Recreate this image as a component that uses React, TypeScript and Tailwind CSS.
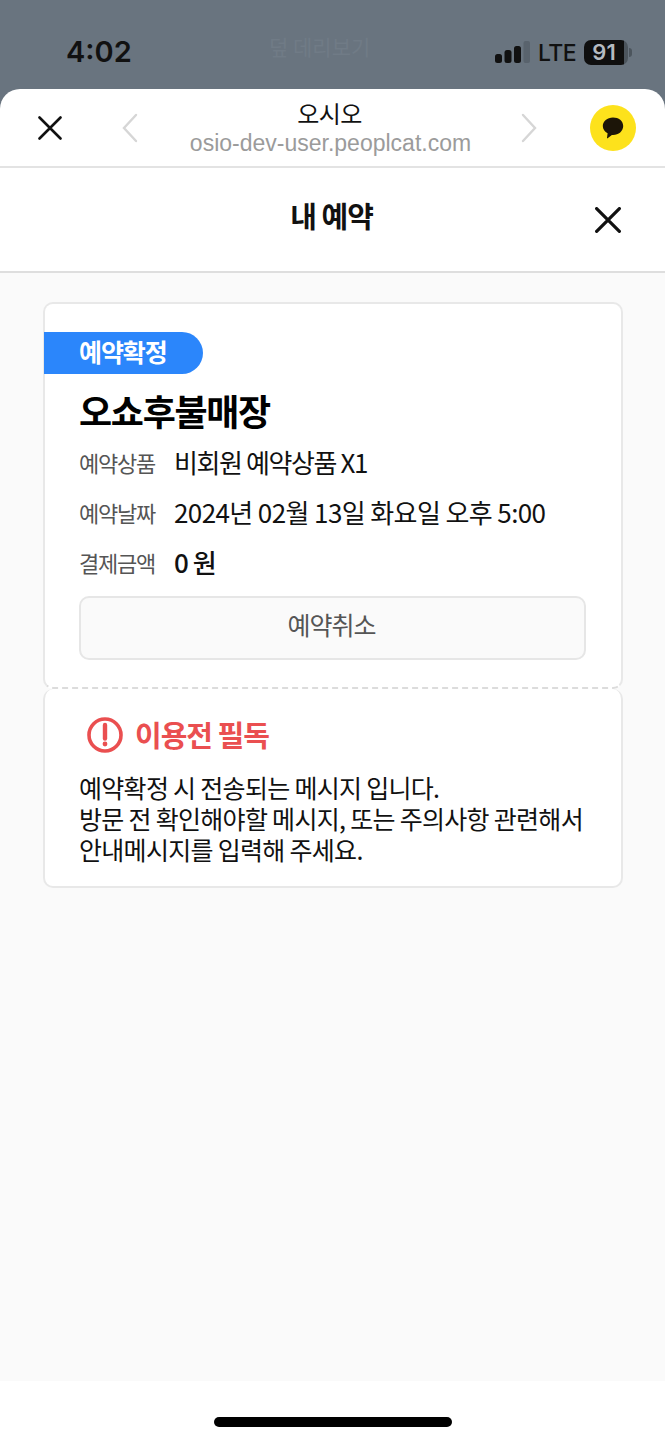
const KR = { fontFamily: '"Noto Sans CJK KR", "Noto Sans", sans-serif' };

function XIcon({ size, stroke }: { size: number; stroke: number }) {
  return (
    <svg width={size} height={size} viewBox="0 0 24 24" fill="none" stroke="#111" strokeWidth={stroke} strokeLinecap="round">
      <path d="M1.5 1.5 22.5 22.5M22.5 1.5 1.5 22.5" />
    </svg>
  );
}

function Row({ label, value, cls }: { label: string; value: string; cls: string }) {
  return (
    <div className="flex h-[50px] items-center">
      <span className="w-[95px] shrink-0 pt-[3px] text-[22px] tracking-[-1.2px] text-[#555]">{label}</span>
      <span className={`text-[26px] text-[#111] ${cls}`}>{value}</span>
    </div>
  );
}

export default function App() {
  return (
    <div style={KR} className="flex h-[1440px] w-[665px] flex-col overflow-hidden bg-[#69747f]">
      <div className="flex h-[89px] shrink-0 items-center pt-[15px] pl-[66px] pr-[33px]">
        <span className="w-[132px] text-[29px] font-semibold text-[#111]" style={{ fontFamily: "Inter, sans-serif" }}>4:02</span>
        <span className="mb-[10px] pl-[71px] text-[21px] text-[#707b86]">덮 데리보기</span>
        <div className="ml-auto flex items-center">
          <svg width="35" height="22" viewBox="0 0 35 22" className="mr-[8px]">
            <rect x="0" y="13" width="7" height="9" rx="2.500" fill="#111" />
            <rect x="9.500" y="9" width="7" height="13" rx="2.500" fill="#111" />
            <rect x="19" y="5" width="7" height="17" rx="2.500" fill="#111" />
            <rect x="28.500" y="0" width="6.500" height="22" rx="2" fill="#59636d" />
          </svg>
          <span className="mr-[8px] pt-[2px] text-[23px] font-medium leading-none tracking-[-0.6px] text-[#111]" style={{ fontFamily: "Inter, sans-serif" }}>LTE</span>
          <div className="flex h-[25px] w-[44px] items-center justify-center rounded-[7px] bg-[linear-gradient(90deg,#0f0f0f_91%,#4c555d_91%)] pr-[4px] text-[22px] font-semibold text-[#b5bbc1]" style={{ fontFamily: "Inter, sans-serif" }}>91</div>
          <div className="ml-[1px] h-[9px] w-[3px] rounded-r-full bg-[#4c555d]" />
        </div>
      </div>

      <div className="flex min-h-0 flex-1 flex-col rounded-t-[20px] bg-white">
        <div className="flex h-[79px] shrink-0 items-center border-b-2 border-[#e3e3e3] pl-[38px] pr-[29px]">
          <XIcon size={24} stroke={2.6} />
          <svg width="16" height="30" viewBox="0 0 16 30" fill="none" stroke="#d6d6d6" strokeWidth="2.4" strokeLinecap="round" className="ml-[60px]"><path d="M14 2 2 15l12 13" /></svg>
          <div className="flex flex-1 flex-col items-center">
            <span className="text-[24px] leading-[30px] tracking-[-0.5px] text-[#111]">오시오</span>
            <span className="pl-[2px] pt-[1px] text-[23px] leading-[28px] text-[#9b9b9b]" style={{ fontFamily: '"Liberation Sans", sans-serif' }}>osio-dev-user.peoplcat.com</span>
          </div>
          <svg width="16" height="30" viewBox="0 0 16 30" fill="none" stroke="#d6d6d6" strokeWidth="2.4" strokeLinecap="round" className="mr-[53px]"><path d="M2 2l12 13L2 28" /></svg>
          <div className="flex h-[46px] w-[46px] items-center justify-center rounded-full bg-[#fde21c]">
            <svg width="22" height="22" viewBox="0 0 22 22"><path d="M11 0.500C5.300 0.500 0.800 4.300 0.800 9c0 3.100 2 5.700 4.800 7.200L5 21c0 .4.300.5.600.3l4.300-3.400c.4 0 .8.100 1.100.100 5.700 0 10.200-3.900 10.200-9S16.700 0.500 11 0.500Z" fill="#1c1508" /></svg>
          </div>
        </div>

        <div className="grid h-[105px] shrink-0 grid-cols-[1fr_auto_1fr] items-center border-b-2 border-[#dedede]">
          <div />
          <div className="pb-[8px] pr-[2px] text-[29px] font-bold tracking-[-1px] text-[#111]">내 예약</div>
          <div className="flex justify-end pr-[44px]"><XIcon size={26} stroke={3} /></div>
        </div>

        <div className="flex flex-1 flex-col bg-[#fafafa] pl-[43px] pr-[42px] pt-[29px]">
          <div className="flex h-[387px] flex-col rounded-[10px] border-2 border-[#e8e8e8] [border-bottom-color:#dcdcdc] [border-bottom-style:dashed] bg-white pt-[28px]">
            <div className="-ml-[1px] flex h-[42px] w-[159px] items-center rounded-r-[21px] bg-[#2b86fb] pb-[3px] pl-[35px] text-[25px] font-bold tracking-[-1.1px] text-white">예약확정</div>
            <div className="pl-[34px] pr-[35px]">
              <div className="mt-[12px] text-[36px] font-bold leading-[48px] tracking-[-1.300px] text-black">오쇼후불매장</div>
              <div className="mt-[2px]">
                <Row label="예약상품" value="비회원 예약상품 X1" cls="tracking-[-1.400px]" />
                <Row label="예약날짜" value="2024년 02월 13일 화요일 오후 5:00" cls="tracking-[-0.600px]" />
                <Row label="결제금액" value="0 원" cls="font-medium tracking-[-1px]" />
              </div>
              <div className="mt-[10px] flex h-[64px] items-center justify-center rounded-[10px] border-2 border-[#e6e6e6] bg-[#fafafa] pb-[7px] pr-[2px] text-[25px] tracking-[-1px] text-[#555]">예약취소</div>
            </div>
          </div>
          <div className="flex h-[199px] flex-col rounded-[10px] border-2 border-t-0 border-[#e8e8e8] bg-white pl-[34px] pr-[29px] pt-[24px]">
            <div className="flex items-center pl-[8px]">
              <svg width="36" height="36" viewBox="0 0 36 36" fill="none" className="mr-[12px]">
                <circle cx="18" cy="18" r="16" stroke="#ea4f50" strokeWidth="3.600" />
                <path d="M18 8v13.500" stroke="#ea4f50" strokeWidth="4.400" strokeLinecap="round" />
                <circle cx="18" cy="27" r="2.400" fill="#ea4f50" />
              </svg>
              <span className="text-[29px] font-bold tracking-[-1px] text-[#ea4f50]">이용전 필독</span>
            </div>
            <div className="mt-[15px] text-[25px] leading-[31px] tracking-[-0.700px] text-[#111]">
              <div>예약확정 시 전송되는 메시지 입니다.</div>
              <div>방문 전 확인해야할 메시지, 또는 주의사항 관련해서</div>
              <div>안내메시지를 입력해 주세요.</div>
            </div>
          </div>
        </div>

        <div className="flex h-[59px] shrink-0 items-start justify-center bg-white pt-[36px]">
          <div className="h-[10px] w-[238px] rounded-full bg-black" />
        </div>
      </div>
    </div>
  );
}
